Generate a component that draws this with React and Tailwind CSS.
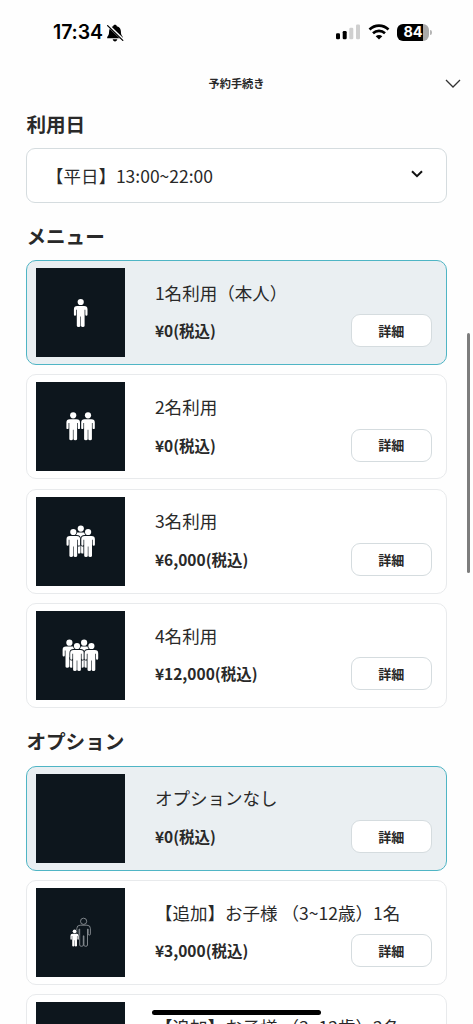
import React, { useState } from 'react';

const BODY =
  'M3.6 6.9 H10.4 Q13.8 6.9 13.8 10.2 V15.6 Q13.8 16.8 12.7 16.8 Q11.6 16.8 11.6 15.6 V10.8 H10.9 V26.8 Q10.9 28 9.1 28 Q7.3 28 7.3 26.8 V17.5 H6.7 V26.8 Q6.7 28 4.9 28 Q3.1 28 3.1 26.8 V10.8 H2.4 V15.6 Q2.4 16.8 1.3 16.8 Q0.2 16.8 0.2 15.6 V10.2 Q0.2 6.9 3.6 6.9 Z';

// x is the centre of the head, y its top
const Person = ({ x, y, scale = 1, outline = false }) => (
  <g transform={`translate(${x - 7 * scale} ${y}) scale(${scale})`}>
    {!outline && (
      <g stroke="#0d161d" strokeWidth="1.6">
        <circle cx="7" cy="3" r="3" />
        <path d={BODY} />
      </g>
    )}
    <g fill={outline ? '#0d161d' : '#fff'} stroke={outline ? '#9ba0a4' : 'none'} strokeWidth="0.8">
      <circle cx="7" cy="3" r="3.1" />
      <path d={BODY} />
    </g>
  </g>
);

const Thumbnail = ({ people }) => (
  <svg viewBox="0 0 89 89" className="w-[89px] h-[89px] shrink-0 bg-[#0d161d]">
    {people.map((person, i) => (
      <Person key={i} {...person} />
    ))}
  </svg>
);

const menuItems = [
  { name: '1名利用（本人）', price: '¥0(税込)', people: [{ x: 44.7, y: 31 }] },
  { name: '2名利用', price: '¥0(税込)', people: [{ x: 37.2, y: 30.3 }, { x: 52, y: 30.3 }] },
  {
    name: '3名利用',
    price: '¥6,000(税込)',
    people: [{ x: 44.8, y: 28.6 }, { x: 37.3, y: 32 }, { x: 52.1, y: 32 }]
  },
  {
    name: '4名利用',
    price: '¥12,000(税込)',
    people: [{ x: 33.4, y: 28.7 }, { x: 48.1, y: 28.7 }, { x: 41, y: 32 }, { x: 55.4, y: 32 }]
  }
];

const optionItems = [
  { name: 'オプションなし', price: '¥0(税込)', people: [] },
  {
    name: '【追加】お子様 （3~12歳）1名',
    price: '¥3,000(税込)',
    people: [{ x: 47.6, y: 30.3, outline: true }, { x: 38.6, y: 41.5, scale: 0.61 }]
  },
  {
    name: '【追加】お子様 （3~12歳）2名',
    price: '¥6,000(税込)',
    people: [{ x: 47.6, y: 30.3, outline: true }, { x: 38.6, y: 41.5, scale: 0.61 }]
  }
];

const ItemCard = ({ item, selected, onSelect }) => (
  <div
    onClick={onSelect}
    className={`flex items-center h-[105.2px] shrink-0 rounded-[10px] border pl-[8.5px] pr-3.5 ${
      selected ? 'bg-[#eaeff2] border-[#4fb5c5]' : 'bg-white border-[#e8eaec]'
    }`}
  >
    <Thumbnail people={item.people} />
    <div className="ml-[30px] flex-1 min-w-0 pb-[1.4px]">
      <p className="text-[17.55px] leading-[38px] whitespace-nowrap">{item.name}</p>
      <div className="flex items-center justify-between h-[38px]">
        <p className="text-[15.5px] font-bold">{item.price}</p>
        <button className="w-[81.5px] h-[33px] rounded-[9px] border border-[#d5dcdf] bg-white text-[13px] font-bold">
          詳細
        </button>
      </div>
    </div>
  </div>
);

const Section = ({ title, items }) => {
  const [selected, setSelected] = useState(0);

  return (
    <section>
      <h2 className="text-[19.6px] leading-[29px] font-bold">{title}</h2>
      <div className="mt-[10.5px] flex flex-col gap-[9.1px]">
        {items.map((item, i) => (
          <ItemCard key={item.name} item={item} selected={i === selected} onSelect={() => setSelected(i)} />
        ))}
      </div>
    </section>
  );
};

const StatusBar = () => (
  <div className="flex items-center justify-between h-16 pl-[53px] pr-[41px] text-black">
    <div className="flex items-center gap-[3.5px] pt-px">
      <span className="font-['Inter',sans-serif] text-[19.5px] font-semibold tracking-[-0.1px]">17:34</span>
      <svg viewBox="0 0 18 18" className="w-[18px] h-[18px]">
        <path
          d="M9 0.8 C10 0.8 10.7 1.4 10.8 2.2 C13.8 3 14.9 5.2 14.9 7.6 C14.9 10.8 15.8 11.8 16.8 13 V14.3 H1.2 V13 C2.2 11.8 3.1 10.8 3.1 7.6 C3.1 5.2 4.2 3 7.2 2.2 C7.3 1.4 8 0.8 9 0.8 Z M6.7 15.3 H11.3 C11 16.7 10.2 17.4 9 17.4 C7.8 17.4 7 16.7 6.7 15.3 Z"
        />
        <path d="M2.1 1.2 L17.3 16" stroke="#fff" strokeWidth="2.6" />
        <path d="M1.6 1.6 L16.8 16.4" stroke="#000" strokeWidth="1.3" strokeLinecap="round" />
      </svg>
    </div>
    <div className="flex items-center">
      <svg viewBox="0 0 24 16" className="w-6 h-4">
        <rect x="0" y="9.3" width="4" height="6" rx="1.2" />
        <rect x="6.7" y="7" width="4" height="8.3" rx="1.2" />
        <rect x="13.3" y="3.7" width="4" height="11.6" rx="1.2" fill="#cfcfcf" />
        <rect x="20" y="0.4" width="4" height="14.9" rx="1.2" fill="#cfcfcf" />
      </svg>
      <svg viewBox="0 0 22 16" className="w-[22px] h-4 ml-2" fill="none" stroke="#000" strokeWidth="2.6">
        <path d="M1.5 5.5 C6.8 0.3 15.2 0.3 20.5 5.5" />
        <path d="M5 9.3 C8.4 6.1 13.6 6.1 17 9.3" />
        <path d="M7.7 12.2 C9.6 10.5 12.4 10.5 14.3 12.2 L11 15.4 Z" fill="#000" stroke="none" />
      </svg>
      <div className="ml-[7px] flex items-center">
        <div className="w-8 h-[17px] rounded-[6px] bg-linear-to-r from-black from-82% to-[#aaa] to-82% flex items-center justify-center">
          <span className="font-['Inter',sans-serif] text-[14.5px] leading-none font-bold tracking-[-0.2px] text-white">84</span>
        </div>
        <div className="ml-px w-[2px] h-[5px] rounded-r-full bg-[#b5b5b5]" />
      </div>
    </div>
  </div>
);

export default function App() {
  return (
    <div className="relative w-[473px] h-[1024px] overflow-hidden bg-[#fefefe] text-[#292929] font-['Noto_Sans_CJK_JP',sans-serif]">
      <StatusBar />

      <header className="grid grid-cols-[1fr_auto_1fr] items-center h-[38px]">
        <h1 className="col-start-2 text-[11.2px] font-bold">予約手続き</h1>
        <svg viewBox="0 0 16 9" className="w-4 h-[9px] mr-3 justify-self-end" fill="none" stroke="#333" strokeWidth="1.3">
          <path d="M1 1 L8 8 L15 1" />
        </svg>
      </header>

      <main className="pl-[26.4px] pr-[26px] pt-[7px]">
        <h2 className="text-[19.6px] leading-[29px] font-bold">利用日</h2>
        <button className="mt-[9.5px] w-full h-[55px] flex items-center justify-between rounded-[9px] border border-[#d5dcdf] bg-white pl-[18.5px] pr-[23.5px] text-[17.5px]">
          <span className="pt-0.5">【平日】13:00~22:00</span>
          <svg viewBox="0 0 12 8" className="w-3 h-2 mb-[3px]" fill="none" stroke="#111" strokeWidth="2">
            <path d="M1 1.2 L6 6.2 L11 1.2" />
          </svg>
        </button>

        <div className="mt-[18px] flex flex-col gap-[18px]">
          <Section title="メニュー" items={menuItems} />
          <Section title="オプション" items={optionItems} />
        </div>
      </main>

      {/* Scroll thumb */}
      <div className="absolute right-[3px] top-[333px] w-[3.5px] h-60 rounded-full bg-[#7d7d7d]" />
      {/* Home indicator */}
      <div className="absolute left-[152px] top-[1009.5px] w-[169px] h-[5.5px] rounded-full bg-black" />
    </div>
  );
}
